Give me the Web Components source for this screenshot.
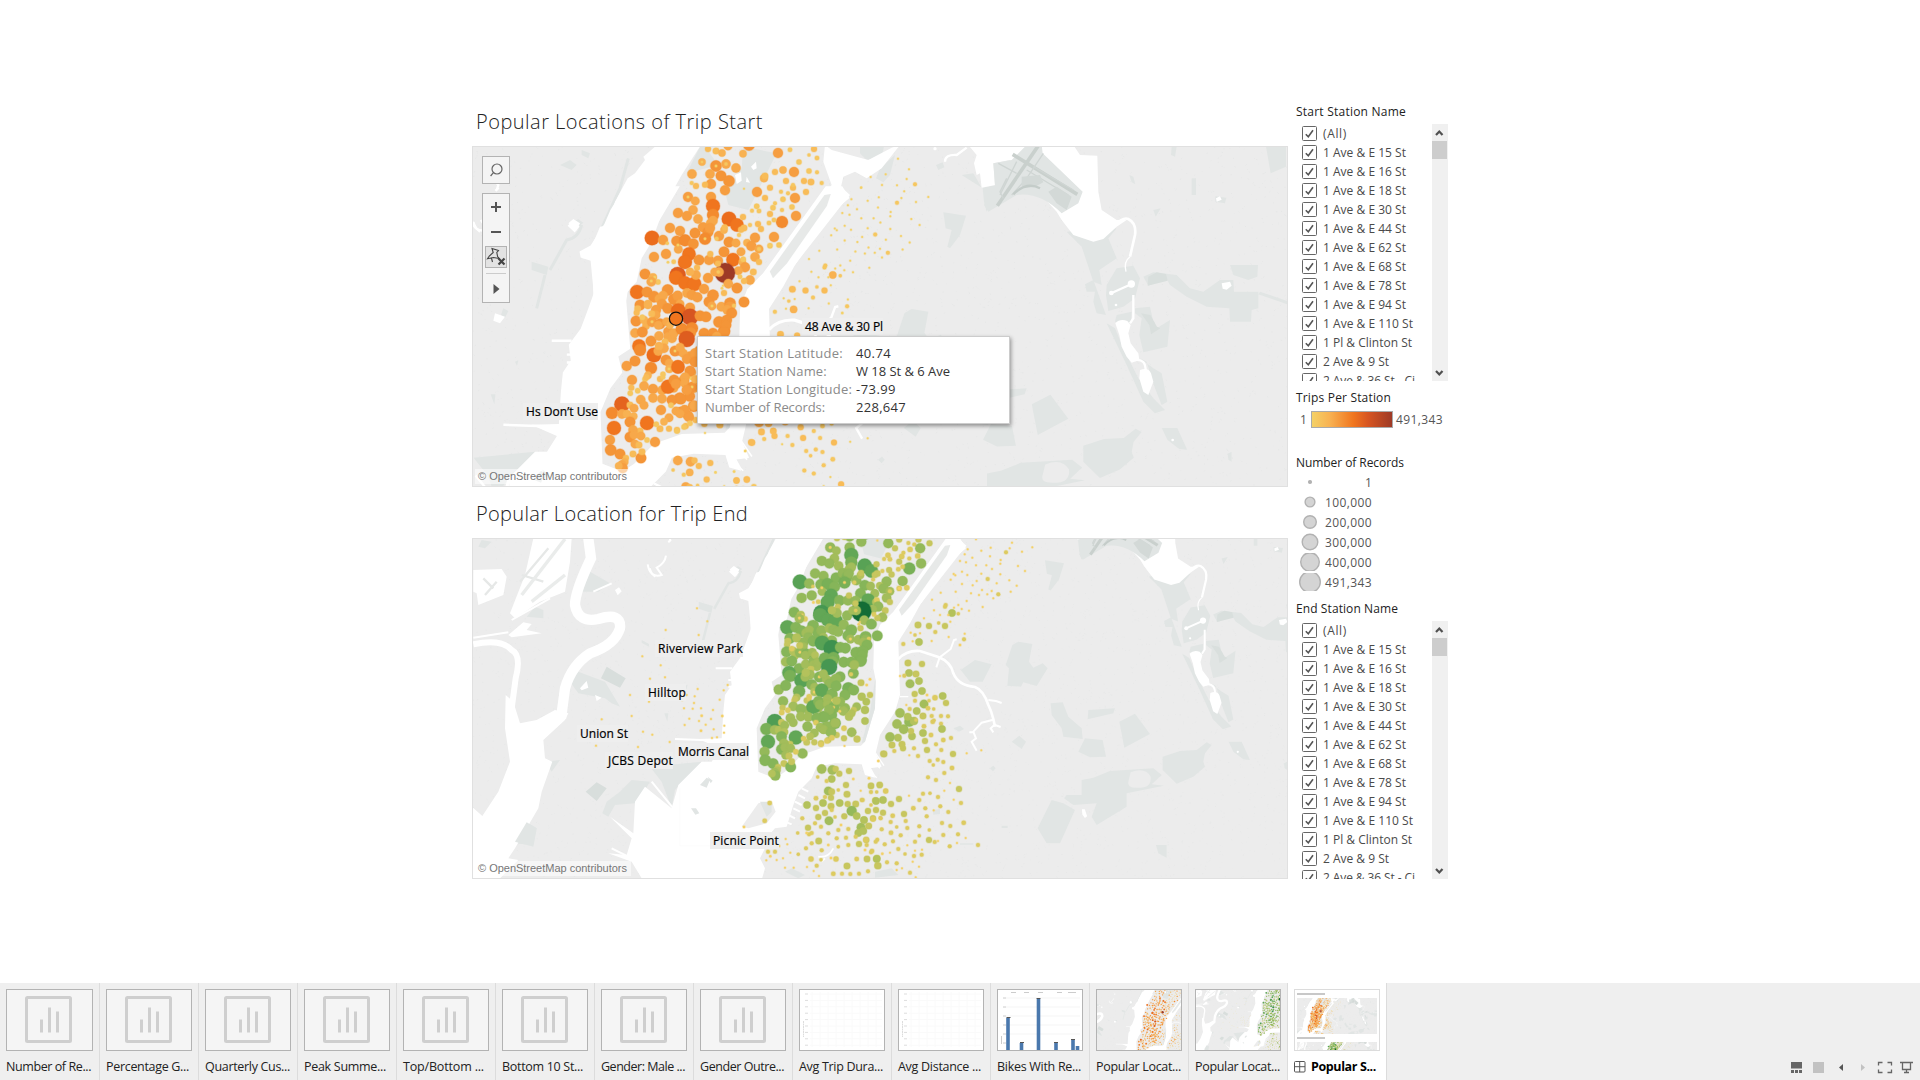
<!DOCTYPE html>
<html lang="en"><head><meta charset="utf-8"><title>Popular Stations</title>
<style>
html,body{margin:0;width:1920px;height:1080px;overflow:hidden;background:#fff}
body{font-family:"Open Sans","Noto Sans",sans-serif;font-size:12px;color:#333}
</style></head><body><story-board></story-board>
<script>
/* station marks: x,y[,radius] in thirds of a pixel */
const MANHATTAN=`354,27,9 378,33,10 396,39,11 414,18,13 459,41,11 477,15,17 564,39,15 600,29,7 672,27,9 627,66,8 657,45,5 681,54,7 336,66,11 336,66,3 378,78,17 378,78,4 408,72,14 408,72,5 438,84,14 360,102,14 393,107,16 417,123,17 306,102,14 363,132,15 345,134,9 305,129,6 318,138,9 405,151,15 462,146,3 522,115,12 525,108,10 555,96,9 579,90,11 612,96,15 657,93,8 681,97,6 588,123,9 642,123,9 663,126,10 695,129,6 609,143,9 648,156,9 540,143,9 573,155,6 594,160,6 609,135,6 501,156,15 525,174,9 579,178,8 615,174,15 555,190,6 549,203,8 606,201,8 540,222,9 576,210,6 500,199,8 486,212,6 507,213,7 618,228,15 576,246,18 294,171,15 294,171,4 316,183,13 363,171,15 309,210,14 369,198,21 264,219,15 291,228,15 324,237,14 369,225,18 362,250,14 369,242,14 417,237,22 441,255,20 459,231,9 462,264,10 453,269,9 480,255,6 504,252,9 513,267,9 537,249,7 552,240,7 240,264,15 270,273,15 315,279,16 339,262,15 354,276,16 360,264,15 345,296,18 345,296,4 387,288,15 380,296,6 402,270,11 404,262,9 186,294,22 219,300,15 260,303,16 285,301,18 310,311,16 447,285,6 552,291,15 567,315,8 540,317,8 540,317,4 495,293,15 417,306,16 438,309,13 471,308,11 484,318,15 507,327,13 507,327,6 453,335,13 265,328,13 264,315,4 192,351,15 228,342,15 232,310,5 297,342,20 285,366,21 327,360,16 357,360,15 361,342,9 402,335,16 384,362,15 429,359,20 457,366,11 460,358,8 495,351,14 507,366,9 465,382,15 445,392,13 490,396,10 251,365,7 234,367,4 321,383,9 165,402,16 189,412,12 194,412,4 204,426,8 184,425,14 184,423,4 263,405,24 258,413,21 285,429,20 313,432,21 354,414,15 405,399,30 374,396,13 387,396,14 385,396,5 384,371,9 318,405,14 300,395,12 342,447,15 415,431,14 441,444,16 480,420,14 462,423,9 450,410,7 396,445,4 399,437,3 402,459,9 141,456,21 171,456,16 192,470,17 207,476,13 233,450,17 219,467,14 150,495,16 174,495,12 143,506,10 140,518,9 216,492,15 198,510,15 198,525,13 174,492,12 233,505,16 252,478,17 263,467,15 291,459,14 305,465,15 322,472,15 369,466,17 357,485,16 366,498,13 366,498,4 394,500,14 420,490,17 420,500,15 412,510,14 432,497,6 462,486,16 425,519,16 300,503,15 270,492,13 265,512,22 300,531,25 330,527,16 348,530,16 387,546,17 410,540,16 408,555,16 402,576,17 138,543,16 162,540,12 168,558,11 157,532,8 186,546,15 186,545,4 210,551,16 205,556,13 185,521,10 230,545,13 135,579,14 157,576,16 183,603,16 207,588,14 235,575,15 240,555,11 234,590,13 246,595,14 251,580,14 275,567,18 306,565,18 302,578,16 290,597,24 342,580,16 369,580,16 380,590,14 225,606,10 147,618,20 150,630,18 192,645,22 222,625,14 205,633,14 207,618,12 255,633,16 255,633,4 280,640,13 291,657,15 270,622,13 228,660,16 238,670,13 110,678,15 135,663,16 183,684,18 238,687,12 237,687,4 264,681,20 300,693,16 315,640,15 315,665,16 126,720,15 174,706,11 165,718,8 169,712,9 162,738,14 189,747,15 210,717,9 219,703,8 219,712,7 234,740,21 252,720,16 258,732,15 285,712,14 284,730,13 306,741,16 306,741,4 290,750,15 303,716,4 316,718,12 124,743,9 121,760,8 143,752,8 96,793,23 120,795,10 152,779,14 189,774,14 216,776,14 246,780,16 273,777,16 243,796,8 213,810,15 162,796,13 258,813,13 284,810,15 270,821,13 297,831,15 312,797,14 66,819,18 96,822,14 111,822,12 132,805,13 131,829,11 72,864,21 120,846,16 171,849,21 150,873,10 129,870,14 120,891,16 132,884,13 153,888,13 195,906,15 171,900,8 60,900,15 62,930,17 90,942,16 129,942,10 153,954,16 135,912,13 147,915,10 156,935,10 108,954,9 104,966,11 96,975,14 98,985,15 86,978,11 210,866,10 237,866,9 237,833,13 222,845,11 199,853,8 261,873,8 282,861,8 300,850,8 345,879,3 390,855,9`;
const EASTSIDE=`1125,545,16 1100,560,15 1150,580,18 1140,600,16 1166,585,16 1188,563,10 1215,600,9 1204,620,11 1190,605,12 1200,645,12 1200,678,11 1175,635,13 1140,640,15 1135,648,14 1110,640,14 1075,665,17 1100,660,16 1110,685,17 1095,708,15 1076,700,16 1160,712,14 1176,732,10 1137,730,9 1115,720,9 1137,700,8 1090,735,9 1068,745,9 1152,665,12 1166,645,9 1160,655,11 1085,620,16 1070,585,19 1105,600,13 1125,620,15 1075,545,15 1100,612,5 1104,636,4 1124,649,4 1165,535,16 1158,538,6 1060,640,13 1030,645,14 1187,495,18 1205,570,4 1215,553,4`;
const BROOKLYN=`1070,822,14 1102,825,14 1123,836,9 1152,828,9 1100,852,11 1058,846,5 1085,858,6 1112,822,9 1143,870,9 1165,852,4 1090,888,13 1100,890,10 1080,906,6 1098,908,9 1120,885,5 1146,898,10 1187,887,3 1074,924,11 1098,934,10 1124,924,11 1148,927,9 1172,927,10 1190,915,6 1026,930,11 1053,910,7 1053,939,9 1100,945,6 1160,948,15 1138,964,9 1080,954,9 1110,966,5 1092,977,13 1060,966,9 1012,970,6 1029,998,9 1050,985,6 1068,995,6 1175,963,11 1197,975,10 1188,997,13 1212,993,9 1180,1014,11 1208,948,7 1233,945,9 1224,970,9 1246,968,5 1218,872,9 1244,870,9 1212,850,4 1230,915,8 1255,776,9 1240,798,4 1128,990,4 1150,1002,6 1120,1005,6 1090,1015,6 1061,1038,10 1032,1018,6 998,1014,5 1025,1014,4 1040,1014,6 1115,1030,6 1143,1028,6 1172,1025,6 1204,1035,9 1232,1040,6 1182,1047,9 1150,1050,6 1120,1055,5 1023,1060,6 1040,1045,6 1070,1066,6 1090,1050,4 1038,1092,8 1068,1094,5 1098,1089,4 1113,1092,8 1146,1113,10 1175,1092,7 1206,1092,9 1236,1090,10 1238,1112,10 1218,1072,6 1200,1065,4 1055,1112,6 1026,1116 1046,1128 1105,1136,7 1131,1136,6 1156,1137,6 1182,1136,6 1062,1143 1000,1078,5 976,1073 960,1118 962,1032 967,1048 942,1053,4 930,1070,6 909,1070,6 916,1084,4 904,1096 935,1095 954,1090 986,1118 914,924,7 899,977,7 837,996,4`;
const QUEENS=`33,873,9 59,870,9 33,891,6 50,891,5 77,888,8 69,915,11 48,918,11 33,930,5 8,915,6 117,912,9 93,927,9 24,948,9 69,953,9 39,972,8 62,970,6 98,962,7 132,957,9 160,940,7 178,915,6 189,896,6 210,895,5 234,906,6 253,887 281,914 303,924,6 297,882,9 270,864 228,855,6 204,847,6 253,834,6 276,819,7 250,801,6 233,794,6 209,798,6 220,810,5 174,783,6 201,765,9 244,765,6 279,777,9 162,760,6 148,781 129,760,9 103,768,6 126,748,10 96,750,10 72,777,10 114,728,11 90,726,14 156,724,11 153,708,9 131,703,14 111,687,14 148,680,15 162,678,12 143,665,11 168,675,5 120,654,14 170,648,11 189,663,10 149,642,6 192,627,13 204,640,7 221,642,5 225,608,8 248,603,11 258,624,9 207,617,5 164,597,9 186,588,11 201,600,4 150,566,13 177,558,11 168,537,10 147,534,11 186,507,9 144,504,10 133,542,6 120,543 165,617,6 139,630 215,663,6 243,663,6 264,664,6 218,680,7 222,676,5 243,686,6 246,702,11 192,694,7 189,714,11 195,738,9 213,720,7 228,748,6 250,735,7 273,729,6 130,447,6 177,441,11 158,439 215,438 165,420,5 180,415 152,413 226,411,6 207,393,9 255,393,9 174,390,10 236,384,5 271,380 192,370 276,354,11 257,330,6 295,356,5 255,335,6 266,426 300,450,4 312,433,6 314,416 222,346 240,360 265,360 282,338 295,330 305,342 327,347 368,336 320,318 357,300 216,314 242,293 287,290 333,295 366,285 400,310 415,298,6 382,298 395,288 410,265 452,290 470,272 448,256 383,252,6 350,258 338,271 306,267 272,254 281,237 286,241 306,230 322,240 348,211 379,211 364,236 396,222 421,238 474,213 495,228 421,206 422,195 438,172,6 390,184 364,167 392,158 449,160 456,143 486,170 517,157 318,202 300,198 337,188 314,178 323,163 348,133 196,940,6 221,946 241,934,6 265,951,6 200,964,6 178,994,6 208,1005,5 246,984,6 271,993,6 311,983,7 294,1018,6 317,1029 354,1050,6 269,1054,6 291,1044 250,1020,6 207,1035,9 224,1041,6 234,1038 162,1083,6 185,1079,6 165,1067 186,1064 178,1022,5 142,999,6 110,996,5 137,978,6 92,981,6 65,1003,6 93,1013,7 122,1021,6 99,1039,6 74,1048,6 52,1034,6 115,1062,6 90,1073 135,1077,5 165,1040,6 142,1051 67,1076,4 36,1068,7 50,1092,11 21,1092,9 54,1112,10 81,1102,6 110,1105,6 24,1129,6 150,1133,6 126,1120 158,1100 177,1115 167,1147 110,1125 12,975,11 25,993,9 10,1008,11 18,1034,8 20,1050,6 147,902 320,775 364,766`;
const JERSEY=`696,340 727,379 602,405 701,420 532,484 587,511 555,551 600,547 495,600 552,620 500,663 410,673 393,752 519,756 534,710 562,719 614,741 698,582 689,604 665,600 652,615 687,624 683,641 657,640 708,640 744,645 764,614 776,586 788,570 772,663,4 710,662,4 673,671 702,678 722,689 659,690 738,672 708,707,4 746,703 778,692 777,713 756,727 741,729`;
const ASTORIA=`114,191 147,223 77,238 32,246 140,252 165,268,6 111,271 66,270 3,278`;
const ORANGE='#f4d166 #f6c760 #f8bc58 #f8b252 #f7a84a #f69e41 #f49538 #f38b2f #f28026 #f0751e #eb6c1c #e4641e #de5d1f #d75521 #cf4f22 #c64a22 #bc4623 #b24223 #a83e24 #9e3a26'.split(' ');
const GREEN='#f4d166 #ddcb60 #c7c65e #b4c25c #a3bd5b #94b95a #86b559 #79b057 #6dac57 #62a756 #58a255 #4f9d54 #469752 #3e914f #368a4b #2f8447 #287e43 #21783f #1a723a #146c36'.split(' ');
const K=.8409, OX=176.6, OY=-32.6;
const parse=(s,f)=>s.split(/\s+/).map(t=>{const[x,y,r=3]=t.split(',').map(Number);const p=f(x/3,y/3);return[p[0],p[1],r/3]});
const inv=(x,y)=>[(x-OX)/K,(y-OY)/K];
const INV=`<g transform="scale(${1/K}) translate(${-OX} ${-OY})">`;
const SHARED=[...parse(BROOKLYN,(x,y)=>inv(x-7,y-43)),...parse(QUEENS,(x,y)=>inv(x+388,y-43)),...parse(EASTSIDE,(x,y)=>inv(x-7,y-43)),...parse(MANHATTAN,(x,y)=>[x+118,y-7])];
const NJ=parse(JERSEY,(x,y)=>inv(x-7,y-43)), NORTH=parse(ASTORIA,(x,y)=>[x+388,y-52]);

/* faint street texture over the land */
const TEXTURE=(()=>{let s=7,d='';const r=()=>(s=(s*16807)%2147483647)/2147483647;
 for(let i=0;i<5200;i++){d+=`M${(r()*1040-215).toFixed(1)},${(r()*450).toFixed(1)}l${(r()*3-1.5).toFixed(1)},${(r()*3-1.5).toFixed(1)}`}return d})();

const LAND=`
<rect x="-230" y="-10" width="1060" height="470" fill="#ececec"/>
<path d="${TEXTURE}" stroke="#e4e6e5" stroke-width="1" fill="none" opacity=".75"/>
<g transform="translate(388 -52) scale(.33333)" fill="#e1e5e4">
 <path d="M1218,155L1278,155 1278,215 1232,235Z M995,250L1008,250 1008,300 995,300Z M1066,304L1099,308 1095,325 1066,320Z M808,240L820,245 826,268 815,262Z M935,155h15l-5,30-12-5Z M880,345l22-5-15,25Z"/>
 <path d="M0,155H72L65,185 20,195 0,175Z M60,220L105,180 90,240 70,262 48,250Z M228,210l20,-8 5,15 -18,8Z"/>
 <path d="M250,352L318,362 300,420 270,460 262,455 275,405 257,400Z M305,240L340,235 365,278 410,270 380,350 372,320 368,280Z"/>
 <path d="M620,410L770,400 745,430 770,490 718,525 725,570 700,560 665,455Z M770,520L820,512 840,550 825,610 790,635 745,648 738,600 740,570Z M675,568L700,555 738,660 710,655 700,620 705,590 680,590Z"/>
 <path d="M850,545L880,532 950,540 990,580 1030,590 1080,555 1120,555 1122,590 1195,590 1195,640 1175,645 1173,680 1110,680 1108,640 1040,635 980,605 930,570 920,552 865,572Z M1110,510H1194L1192,545 1165,555 1120,540Z M1200,590L1282,618V628L1195,598Z"/>
 <path d="M825,640L870,635 880,680 890,700 930,675 922,755 850,772 838,720 845,670 825,655Z M740,685L765,700 790,760 835,850 880,910 915,945 885,955 850,920 800,810Z M770,660L815,650 812,685 765,680Z M840,790L880,820 905,835 922,920 905,930 885,880 860,800Z"/>
</g>
<g transform="translate(388 -52) scale(.33333)" fill="#d9dfdd">
 <path d="M865,545L890,532 918,537 923,557 863,572Z M843,655l28,5 20,35 10,5 -28,18 -5,-28Z"/>
</g>
<g transform="translate(-7 -52) scale(.33333)" fill="#e1e5e4">
 <path d="M705,155L665,235 760,210 720,155Z M835,155L935,175 850,345 790,330 780,290 830,220Z M285,210l30-15 20,15-15,15Z M350,165l25,10-5,15-20-10Z"/>
 <path d="M200,500L250,515 245,540 200,525Z M310,385l30-12 15,10-25,20Z"/>
 <path d="M490,190L465,280 410,400 M350,390Q340,430 305,435L255,525 M240,540L215,640" fill="none" stroke="#e1e5e4" stroke-width="9"/>
 <path d="M115,640l15,8-10,20-12-8Z M150,800l10,-4 -4,16Z"/>
</g>
${INV}
<g transform="translate(-7 -43) scale(.33333)" fill="#e1e5e4">
 <path d="M40,155L50,135 80,140 60,160Z M375,230L435,265 400,290 350,290Z M185,365L210,335 235,345 235,370Z M315,560L340,530 420,560 465,635 440,625 420,610 340,595Z"/>
 <path d="M425,515L482,550 465,578 408,550Z M362,890L395,862 425,880 395,918Z" fill="#d8dedc"/>
 <path d="M425,920L465,890 500,855 555,860 530,900 510,925 450,930 430,965 412,955Z M150,1040L185,982 215,1000 205,1050 145,1045Z M555,815L710,800 630,885 620,940 590,860Z M530,435l22,12v8l-22,-12Z M598,655h12l-3,25Z M240,800L285,795 260,830Z"/>
 <path d="M960,1130l20,-10 40,20 -20,10Z"/>
</g>
<g transform="translate(388 -43) scale(.33333)" fill="#e1e5e4">
 <path d="M457,450L475,440 517,447 507,500 520,518 548,505 563,520 530,573 490,562 483,575 442,572 447,520 437,510Z M302,525L345,495 395,508 368,560 330,560Z"/>
 <path d="M572,625L608,622 625,665 665,700 668,732 610,725 605,700 575,660Z M685,645L765,640 760,655 683,673Z M655,770L675,730 728,735 738,785 690,787Z M455,740L478,722 498,740 485,762Z"/>
 <path d="M778,680L825,656 870,717 793,758Z M908,785L960,768 1010,765 1040,742 1055,750 1035,775 1030,800 1035,815 1000,845 950,866 908,825Z M1106,740L1145,740 1170,795 1150,793 1120,770Z M1272,805l10,-5v25l-8,-5Z"/>
 <path d="M665,855L700,848 750,828 880,820 905,840 875,868 912,872 800,895 800,935 710,990 695,965 710,925 640,930 612,910 620,900 665,900Z"/>
 <path d="M533,1000L575,915 610,925 645,945 600,1045 560,1045Z M888,1050L920,1050 920,1088 895,1075Z"/>
 <path d="M812,832Q855,815 872,845Q875,880 835,878Q800,880 805,860Z" fill="#ececec"/>
 <path d="M280,700l20-8 12,10-15,8Z M425,992h18v7h-18Z M300,1045h40v4h-40Z M45,1130l50-10 20,20-70,8Z M218,945l22-3 0,15-20,2Z M390,820l10,-8 7,8 -8,9Z"/>
</g></g>`;
const WATER=`
<g transform="translate(-7 -52) scale(.33333)" fill="#fff">
 <path d="M575,150L570,155 535,185 540,195 510,235 488,250 450,320 430,390 405,395 380,455 345,470 352,490 382,490 385,600 L480,600 515,560 530,490 560,440 600,330 650,240 708,150Z"/>
 <path d="M1080,150L1075,200 1100,270 950,480 890,555 830,610 835,660 895,670 920,620 950,560 1130,330 1155,300 1128,275 1135,245 1170,230 1205,250 1250,220 1305,150 1280,158 1210,195 1100,165Z"/>
 <path d="M310,385L325,372 345,385 333,408Z M90,655l30,10-15,20-20-8Z M858,215l15-15 2,20 -10,5Z M810,240l18,-8 2,25 -15,10Z M845,245l10,18 -12,-2Z"/>
 <path d="M25,380Q30,400 45,410M88,255L100,270 95,285" fill="none" stroke="#fff" stroke-width="7"/>
</g>
<g transform="translate(388 -52) scale(.33333)">
 <path fill="#fff" d="M325,150L350,180 342,205 350,240 360,235 365,278 405,270 400,205 450,195 590,350 605,375 640,420 700,440 730,432 770,395 800,375 770,375 725,345 715,290 712,182 660,180 640,150Z"/>
 <path d="M400,205L455,195 500,150H545L548,175 668,290 655,325 605,355Q540,290 470,300L385,350 372,330 405,272Z" fill="#e1e5e4"/>
 <path d="M535,152L412,332" stroke="#c9d0cd" stroke-width="11"/><path d="M458,178L652,298" stroke="#c9d0cd" stroke-width="11"/>
 <path d="M520,215L640,285 M500,225L625,300M470,200L420,300M440,250L420,290 430,310M550,175L500,250L455,300M415,205L470,235" stroke="#cfd5d3" stroke-width="4" fill="none"/>
 <path d="M485,245L540,240 550,262 525,275 485,280Z M565,290L590,275 635,305 620,345 590,325Z" fill="#d3d9d7"/>
 <path d="M460,298Q500,258 540,280" stroke="#c4ccc9" stroke-width="7" fill="none"/>
 <g fill="none" stroke="#fff" stroke-width="7"><path d="M765,390Q790,365 805,372Q830,385 825,420L810,485" stroke-width="8"/><path d="M810,485Q790,500 798,530" stroke-width="4"/><path d="M755,594L815,567"/><path d="M820,600V670L810,685M825,795Q858,790 857,830" /></g>
 <path fill="#fff" d="M766,685Q780,670 802,678L812,690 805,715 812,745 835,775 838,795 815,803 800,785 785,755 778,720Z M840,825Q865,815 873,835L880,860 865,900 850,890 838,850Z M1085,565l25-5 5,12-15,12-12-3Z M1068,310l12,-6 5,10 -15,6Z"/><g fill="#fff"><circle cx="814" cy="567" r="11"/><circle cx="754" cy="594" r="7"/><circle cx="768" cy="630" r="4"/><circle cx="938" cy="1035" r="4"/><circle cx="225" cy="161" r="5"/></g>
 <path d="M255,200Q255,178 290,180L320,158" fill="none" stroke="#fff" stroke-width="7"/>
</g>
${INV}
<g transform="translate(-7 -43) scale(.33333)">
 <path fill="#fff" d="M948,130L925,150 900,190 885,225 850,280 822,295 825,310 850,318 858,400 840,450 825,490 795,530 800,570 780,600 775,650 770,730 700,732 765,760 740,800 710,800 640,870 620,940 540,875 510,920 505,1015 435,965 500,1030 485,1080 430,1075 500,1100 545,1175 L890,1155 900,1120 885,1090 900,1060 890,1045 930,1000 965,995 985,930 1000,890 1040,850 1055,815 1110,805 1190,808 1200,840 1230,848 1215,820 1250,815 1232,775 1245,720 1290,650 1305,600 1300,440 1335,385 1365,330 1455,200 1503,160 1485,130 1443,130 1285,350 1245,390 1227,440 1225,520 1233,560 1230,640 1200,740 1188,752 1080,755 1010,780 960,830 930,850 880,830 875,700 900,640 930,600 920,560 950,540 940,420 950,350 980,290 1075,130Z"/>
 <path d="M1302,345L1440,152 1456,150 1446,180 1345,325 1310,362Z" fill="#e7e9e8"/>
 <path d="M1231,550L1230,640 1200,740 1190,745 1215,650Z" fill="#e1e5e4"/>
 <path d="M205,130L320,130 315,200 300,290 225,320 150,370 135,355 180,240Z" fill="#fff"/>
 <path d="M25,225L110,222 125,245 115,300 40,330 35,295 25,290Z M130,420l45,-38 25,5 -15,18 45,10 -90,12Z M450,285l12-8 8,12-12,12Z M792,230L805,217 822,232 810,247Z M345,580l20-22 5,20-20,8Z M390,600l20,8-15,10Z" fill="#fff"/>
 <path d="M55,250L85,280M60,300L95,260M170,240L235,260M250,160L165,260" stroke="#e6e8e7" stroke-width="7"/>
 <path d="M300,132L170,300M200,320L300,240" stroke="#eaeceb" stroke-width="10" fill="none"/>
 <path d="M370,130L378,190Q330,290 330,330Q340,385 400,372Q470,350 465,400Q450,450 375,475Q320,510 300,580L288,670" fill="none" stroke="#fff" stroke-width="31"/>
 <path d="M25,448Q110,430 140,465Q170,480 152,550L140,640V700" fill="none" stroke="#fff" stroke-width="18"/>
 <path d="M122,600L145,620 165,685 215,675 270,645 310,655 300,675 235,735 240,790 262,800 230,890 220,940 150,1060 130,1090 160,1095 95,1160H15V930L52,963 100,890 135,800 120,700Z" fill="#fff"/>
 <path d="M150,1040L185,982 215,1000 205,1055Z" fill="#e1e5e4"/>
 <path d="M548,208Q555,250 590,240L575,218Q600,205 603,182M610,142l8-8M140,375L255,310M385,290L440,265M25,428L130,412" fill="none" stroke="#fff" stroke-width="6"/>
 <path d="M830,995L880,925 920,918 932,950 905,985 850,1000Z" fill="#ececec"/><path d="M885,920h35v30l-15,15Z M678,940l15,0 10,15-12,4Z M705,870l20-22 10,6-10,24Z M728,845l15,12-6,8Z" fill="#e1e5e4"/>
 <path d="M752,520h50M790,555h30M790,575h40M790,605h25M780,640h30M630,732L770,737M560,860L625,940M440,1060L490,1085M1010,880l20,10M1000,900l20,10M990,920l20,10M985,940l20,10M970,960l20,10M960,980l20,8" stroke="#fff" stroke-width="6"/>
 <path d="M645,880V1053H740" fill="none" stroke="#fafafa" stroke-width="2"/>
 <path d="M1060,1085Q1090,1090 1105,1060M1070,1100l10,-10" stroke="#fff" stroke-width="5" fill="none"/>
</g>
<g transform="translate(388 -43) scale(.33333)" fill="none" stroke="#fff" stroke-width="8">
 <path d="M115,492Q140,465 180,468L235,486Q272,500 280,535Q295,572 345,576Q370,585 385,630Q395,650 400,672L405,695"/>
 <path d="M235,490L272,462 282,435 290,433M385,615L408,618 425,624M400,674L365,683 340,710 348,730 335,740 350,767M405,690L422,696M403,690L392,700 400,712M238,490L229,517M340,712h-12" stroke-width="6"/>
 <path d="M20,800L45,845M40,765L72,812M30,790L60,820M120,605h25M20,820l30,28" stroke-width="4"/>
 <path d="M668,945l5,0 6,18 -4,3 -6,-8Z" fill="#fff" stroke-width="4"/>
</g></g>`;

/* every text with data-w is tracked so that it takes exactly that width */
function fit(root){root.querySelectorAll('[data-w]').forEach(e=>{e.style.letterSpacing='0px';const w=e.getBoundingClientRect().width;const n=[...e.textContent].length;e.style.letterSpacing=((+e.dataset.w-w)/n)+'px'})}
class Base extends HTMLElement{
 constructor(){super();this.attachShadow({mode:'open'})}
 connectedCallback(){this.shadowRoot.innerHTML=`<style>*{box-sizing:border-box}:host{display:block}[data-w]{display:inline-block;white-space:nowrap}${this.css?this.css():''}</style>`+this.html();fit(this.shadowRoot)}
}
const def=(n,c)=>customElements.define(n,c);

def('geo-layer',class extends Base{
 css(){return `:host{width:100%;height:100%;overflow:hidden}svg{display:block;width:100%;height:100%}`}
 html(){
  const end=this.getAttribute('kind')==='end',thumb=this.getAttribute('dot'),pal=end?GREEN:ORANGE;
  const vb=this.getAttribute('box')||'0 0 814 339';
  const pts=end?[...NJ,...SHARED]:[...NORTH,...SHARED];
  const q=thumb?+thumb:1;
  const c=pts.map(([x,y,r])=>{if(end){x=x*K+OX;y=y*K+OY}
   const v=Math.min(1,(r/9.9)**2),i=Math.round(v*19);
   return `<circle cx="${x.toFixed(1)}" cy="${y.toFixed(1)}" r="${(r*q).toFixed(1)}" fill="${pal[i]}" stroke="${pal[i]}"/>`}).join('');
  return `<svg viewBox="${vb}" preserveAspectRatio="xMidYMid slice"><g transform="translate(-1 ${end?-1:0})"><g ${end?`transform="translate(${OX} ${OY}) scale(${K})"`:''}>${LAND}${WATER}</g><g stroke-width="1.3" stroke-opacity=".3">${c}</g>${!end&&!thumb?'<circle cx="204" cy="171.7" r="6.6" fill="#f0751e" stroke="#111" stroke-width="1.2"/>':''}</g></svg>`}
});
def('map-tag',class extends Base{
 css(){return `:host{position:absolute;height:17px;background:#eeeeee;color:#000;font:500 12px/17px "Open Sans",sans-serif;-webkit-text-stroke:.2px #000;white-space:nowrap}`}
 html(){return `<span data-w="${this.getAttribute('w')}">${this.getAttribute('text')}</span>`}
});
def('map-tools',class extends Base{
 css(){return `:host{position:absolute;left:9px;top:9px;width:28px}
 div{border:1px solid #b3b3b3;background:#f4f4f4;width:28px}.s{height:28px;margin-bottom:9px}.g{height:110px}svg{display:block;width:26px}`}
 html(){return `<div class="s"><svg viewBox="0 0 26 26" height="26" fill="none" stroke="#666" stroke-width="1.2"><circle cx="14" cy="12" r="5"/><path d="M10.4 15.6L7.6 19"/></svg></div>
 <div class="g"><svg viewBox="0 0 26 108" height="108" fill="none"><path d="M8 13h10M13 8v10M8 38h10" stroke="#555" stroke-width="2"/><rect x="2.500" y="52.500" width="21" height="21" fill="#e3e3e3" stroke="#b3b3b3"/><path d="M9 54.500L15.500 56.500 13.800 58.500 14.600 62.500 16.200 64.500 10.500 63.500 4.500 64.800 6.300 62 10.200 58.500ZM8.300 63.500L9.500 68" stroke="#444" stroke-width="1.100"/><path d="M15.500 64.500l6 6M21.500 64.500l-6 6" stroke="#444" stroke-width="2.200"/><path d="M3 79.500h20" stroke="#ccc"/><path d="M10.500 90v10l6-5Z" fill="#555"/></svg></div>`}
});
def('data-tooltip',class extends Base{
 css(){return `:host{position:absolute;left:224px;top:189px;width:313px;height:88px;background:#fff;border:1px solid #ccc;box-shadow:1px 2px 4px rgba(0,0,0,.4);padding:7px 0 0 7px;font-size:13px;line-height:18px}
 p{margin:0;display:flex;height:18px}b{font-weight:400;color:#8a8a8a;width:151px;flex:none}i{font-style:normal;color:#333}`}
 html(){return [['Start Station Latitude:',138,'40.74',35],['Start Station Name:',122,'W 18 St &amp; 6 Ave',94],['Start Station Longitude:',147,'-73.99',40],['Number of Records:',120,'228,647',50]].map(a=>`<p><b><span data-w="${a[1]}">${a[0]}</span></b><i data-w="${a[3]}">${a[2]}</i></p>`).join('')}
});
def('trip-map',class extends Base{
 css(){return `:host{width:816px}h2{margin:0;height:var(--th);padding:var(--tp) 0 0 4px;font:300 20px/26px "Open Sans",sans-serif;color:#222}
 .m{position:relative;width:816px;height:341px;border:1px solid #e0e0e0}
 .c{position:absolute;left:2px;bottom:2px;height:15px;background:rgba(255,255,255,.55);font:11px/15px "Liberation Sans",sans-serif;color:#777;padding:0 4px 0 3px}`}
 html(){return `<h2><span data-w="${this.getAttribute('w')}">${this.getAttribute('title-text')}</span></h2><div class="m"><geo-layer kind="${this.getAttribute('kind')}"></geo-layer><slot></slot><span class="c"><span data-w="149">© OpenStreetMap contributors</span></span></div>`}
});
def('check-row',class extends Base{
 css(){return `:host{display:flex;height:19px;align-items:center;padding-left:6px;gap:6px;flex:none;color:#4a4a4a;font-size:12px;line-height:19px}svg{flex:none;display:block}`}
 html(){return `<svg width="15" height="15" viewBox="0 0 15 15" fill="none"><rect x=".5" y=".5" width="14" height="14" rx="1" fill="#fff" stroke="#666"/><path d="M3.800 8.200L6.300 10.800 11 4.300" stroke="#555" stroke-width="1.600"/></svg><span data-w="${this.getAttribute('w')}">${this.getAttribute('text')}</span>`}
});
const ROWS=[['(All)',24],['1 Ave &amp; E 15 St',83],['1 Ave &amp; E 16 St',83],['1 Ave &amp; E 18 St',83],['1 Ave &amp; E 30 St',83],['1 Ave &amp; E 44 St',83],['1 Ave &amp; E 62 St',83],['1 Ave &amp; E 68 St',83],['1 Ave &amp; E 78 St',83],['1 Ave &amp; E 94 St',83],['1 Ave &amp; E 110 St',90],['1 Pl &amp; Clinton St',89],['2 Ave &amp; 9 St',66],['2 Ave &amp; 36 St - Ci',92]];
def('filter-list',class extends Base{
 css(){return `.h{height:16px;line-height:16px;font-size:12px;color:#222}.b{display:flex;margin-top:4px;height:var(--lh);overflow:hidden}.l{width:136px;flex:none;overflow:hidden}
 .s{width:16px;background:#f0f0f0;display:flex;flex-direction:column;justify-content:space-between}.s i{display:block;height:18px;background:#cdcdcd;width:15px}svg{display:block}`}
 html(){const a=d=>`<svg width="16" height="17" viewBox="0 0 16 17"><path d="${d}" fill="none" stroke="#505050" stroke-width="2.200"/></svg>`;
 return `<div class="h"><span data-w="${this.getAttribute('w')}">${this.getAttribute('label')}</span></div><div class="b"><div class="l">${ROWS.map(r=>`<check-row text="${r[0]}" w="${r[1]}"></check-row>`).join('')}</div><div class="s"><div>${a('M4 11L7.300 7.500 10.500 11')}<i></i></div>${a('M4 7L7.300 10.500 10.500 7')}</div></div>`}
});
def('legend-pane',class extends Base{
 css(){return `:host{display:flow-root;height:220px;font-size:12px;color:#222}.t{height:16px;line-height:16px}.t1{margin-top:9px}.r{display:flex;align-items:center;height:17px;margin-top:5px;padding-left:4px;color:#555}
 .k{width:82px;height:17px;margin:0 3px 0 4px;border:1px solid #aaa;background:linear-gradient(90deg,#f4d166,#f8b252 22%,#f0751e 52%,#d75521 70%,#9e3a26)}
 .t2{margin-top:27px}.z{display:flex;height:20px;align-items:center;width:76px;color:#555;position:relative;top:1px}.z svg{flex:none;margin-left:2px}.z span{margin-left:auto}`}
 html(){return `<div class="t t1"><span data-w="95">Trips Per Station</span></div><div class="r"><span data-w="7">1</span><div class="k"></div><span data-w="47">491,343</span></div><div class="t t2"><span data-w="108">Number of Records</span></div>`+
 [['1',1.400,7],['100,000',4.900,47],['200,000',6.300,47],['300,000',7.800,47],['400,000',9.300,47],['491,343',10.300,47]].map((a,i)=>`<div class="z"><svg width="24" height="18" viewBox="0 0 24 18"><circle cx="12" cy="9" r="${a[1]}" fill="${i?'#d4d4d4':'#b2b2b2'}" stroke="#b2b2b2" stroke-width="1.400"/></svg><span data-w="${a[2]}">${a[0]}</span></div>`).join('')}
});
def('sheet-tab',class extends Base{
 css(){const act=this.hasAttribute('active');return `:host{width:99px;height:97px;flex:none;border-right:1px solid #dcdcdc;padding:6px 5px 0 6px;${act?'background:#fff;':''}}:host(:first-child){width:100px}
 .b{width:86px;height:62px;border:1px solid ${act?'#dcdcdc':'#b3b3b3'};background:#f5f5f5;overflow:hidden}.b.w{background:#fff}:host(:first-child) .b{width:87px}svg{display:block}
 .l{margin:7px 0 0 0;height:18px;line-height:18px;font-size:12.500px;color:#222;display:flex;align-items:center;white-space:nowrap;${act?'font-weight:700;color:#000;gap:5px':''}}
 .d{padding:3px 2px 0;display:flex;flex-direction:column;gap:3px}.d geo-layer{width:80px;height:36px;flex:none}.d u{height:2px;width:28px;background:#c8c8c8;display:block}`}
 html(){const k=this.getAttribute('kind');let p='',w='w';
 if(k==='icon'){w='';p=`<svg width="84" height="60" viewBox="0 0 84 60"><rect x="19.500" y="7.500" width="44" height="44" rx="1" fill="none" stroke="#cfcfcf" stroke-width="3"/><path d="M34.500 29.500v13M42.500 17.500v25M50.500 21.500v21" stroke="#cfcfcf" stroke-width="3"/></svg>`}
 else if(k==='grid'){let d='';for(let i=0;i<9;i++)d+=`M5 ${4+i*6.4}h3`;let e='';for(let i=0;i<9;i++)e+=`M10 ${4+i*6.4}H82M${12+i*8} 2V57`;p=`<svg width="84" height="60"><path d="${e}" stroke="#fafafa"/><path d="${d}" stroke="#ddd"/><path d="M3.500 31v16" stroke="#ddd" stroke-dasharray="2 .5"/></svg>`}
 else if(k==='bars'){p=`<svg width="84" height="60"><path d="M8 8H82M8 17H82M8 26H82M8 35H82M8 44H82" stroke="#f5f5f5"/><path d="M5 8h3M5 17h3M5 26h3M5 35h3M5 44h3M5 53h3M13 2.500h5M26 2.500h5M40 2.500h5M59 2.500h5M70 2.500h8" stroke="#ccc"/><path d="M3.500 46v8" stroke="#ccc"/><path d="M10 60V28M23.500 60V53M40.500 60V9M58 60V53M75 60V50M79.500 60V56" stroke="#4a78ad" stroke-width="3.600"/><path d="M8.500 27.500h4M22 52.500h4M38.500 8.500h4M56 52.500h4M73 49.500h4" stroke="#555"/></svg>`}
 else if(k==='start')p=`<geo-layer kind="start" dot=".6" box="-60 20 400 286"></geo-layer>`;
 else if(k==='end')p=`<geo-layer kind="end" dot=".55" box="5 30 385 275"></geo-layer>`;
 else p=`<div class="d"><u></u><geo-layer kind="start" dot="1.050"></geo-layer><u></u><geo-layer kind="end" dot="1.050"></geo-layer></div>`;
 return `<div class="b ${w}">${p}</div><div class="l">${k==='dash'?'<svg width="12" height="12" viewBox="0 0 12 12"><rect x=".5" y=".5" width="10.500" height="10.500" rx="1" fill="none" stroke="#555"/><path d="M5.700 0v11M0 5.700h11" stroke="#555"/></svg>':''}<span data-w="${this.getAttribute('w')}">${this.getAttribute('text')}</span></div>`}
});
def('tab-strip',class extends Base{
 css(){return `:host{display:flex;height:97px;background:#efefef;justify-content:space-between;align-items:flex-end}.t{display:flex}.v{margin:0 5px 6px 0}`}
 html(){const T=[['Number of Re...',85],['Percentage G...',83],['Quarterly Cus...',85],['Peak Summe...',82],['Top/Bottom ...',81],['Bottom 10 St...',81],['Gender: Male ...',84],['Gender Outre...',84],['Avg Trip Dura...',84,'grid'],['Avg Distance ...',83,'grid'],['Bikes With Re...',84,'bars'],['Popular Locat...',85,'start'],['Popular Locat...',85,'end'],['Popular S...',65,'dash']];
 return `<div class="t">${T.map((t,i)=>`<sheet-tab text="${t[0]}" w="${t[1]}" kind="${t[2]||'icon'}" ${i===13?'active':''}></sheet-tab>`).join('')}</div>
 <svg class="v" width="125" height="14" viewBox="0 0 125 14"><path d="M1 2h11v6.500H1ZM1 10h3v3H1ZM5 10h3v3H5ZM9 10h3v3H9Z" fill="#666"/><path d="M23 2h11v11H23Z" fill="#c2c2c2"/><path d="M53 4v7L49 7.500Z" fill="#555"/><path d="M71 4v7L75 7.500Z" fill="#c2c2c2"/><path d="M88.500 5.500v-3h4M97.500 2.500h4v3M101.500 9.500v3h-4M92.500 12.500h-4v-3" fill="none" stroke="#666" stroke-width="1.300"/><path d="M110 2.500h13M112.500 3v6.500h8V3M116.500 9.500v3M114 12.500h5" fill="none" stroke="#666" stroke-width="1.300"/></svg>`}
});
def('story-board',class extends Base{
 css(){return `:host{display:flex;flex-direction:column;justify-content:space-between;width:1920px;height:1080px}
 .d{display:flex;gap:8px;padding:96px 0 0 472px}.l{width:816px}.r{width:152px;padding-top:8px}
 .l trip-map:first-child{--th:50px;--tp:13px}.l trip-map:last-child{--th:51px;--tp:14px}.r filter-list{--lh:257px}.r filter-list:last-child{--lh:258px}`}
 html(){const tag=(x,y,w,t)=>`<map-tag style="left:${x-476}px;top:${y+2}px;padding-left:3px" w="${w}" text="${t}"></map-tag>`;
 return `<div class="d"><div class="l">
 <trip-map kind="start" title-text="Popular Locations of Trip Start" w="287">${tag(805,169,78,'48 Ave &amp; 30 Pl')}${tag(526,254,72,'Hs Don’t Use')}<map-tools></map-tools><data-tooltip></data-tooltip></trip-map>
 <trip-map kind="end" title-text="Popular Location for Trip End" w="272">${tag(658,99,85,'Riverview Park')}${tag(648,143,38,'Hilltop')}${tag(580,184,48,'Union St')}${tag(608,211,65,'JCBS Depot')}${tag(678,202,71,'Morris Canal')}${tag(713,291,66,'Picnic Point')}</trip-map></div>
 <div class="r"><filter-list label="Start Station Name" w="110"></filter-list><legend-pane></legend-pane><filter-list label="End Station Name" w="102"></filter-list></div></div>
 <tab-strip></tab-strip>`}
});
</script></body></html>
